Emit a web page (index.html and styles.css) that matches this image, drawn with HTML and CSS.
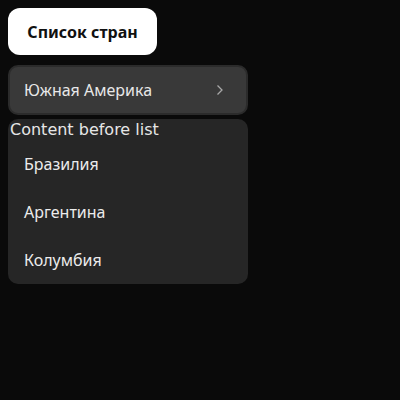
FILE: index.html
```html
<!DOCTYPE html>
<html lang="ru">
<head>
<meta charset="utf-8">
<link rel="stylesheet" href="styles.css">
</head>
<body>
<div class="page">
  <button class="title-btn">Список стран</button>
  <div class="group-row">
    <span class="group-label">Южная Америка</span>
    <svg class="chev" width="8" height="12" viewBox="0 0 8 12"><path d="M1.5 1.5 L6 6 L1.5 10.5" fill="none" stroke="#a8a8a8" stroke-width="1.3"/></svg>
  </div>
  <div class="list-card">
    <div class="before">Content before list</div>
    <div class="item">Бразилия</div>
    <div class="item">Аргентина</div>
    <div class="item">Колумбия</div>
  </div>
</div>
</body>
</html>
```
FILE: styles.css
```css
html, body { margin: 0; padding: 0; background: #0a0a0a; }
body { width: 400px; height: 400px; }
.page { padding: 8px; display: flex; flex-direction: column; align-items: flex-start; }
.title-btn {
  width: 149px; height: 47px;
  background: #ffffff; color: #111;
  border: none; border-radius: 12px;
  font-family: "Noto Sans", sans-serif; font-weight: 700; font-size: 16px;
  padding: 0;
}
.group-row {
  margin-top: 10px;
  box-sizing: border-box;
  width: 240px; height: 50px;
  background: #393939;
  border: 2px solid #2b2b2b;
  border-radius: 10px;
  display: flex; align-items: center; justify-content: space-between;
  padding: 0 22px 0 14px;
  font-family: "Noto Sans", sans-serif; font-size: 16px; color: #e8e8e8;
}
.list-card {
  margin-top: 4px;
  width: 240px;
  background: #262626;
  border-radius: 10px;
  display: flex; flex-direction: column;
}
.before {
  font-family: "DejaVu Sans", sans-serif; font-size: 16px; color: #e6e6e6;
  padding: 1px 0 0 2px; height: 20px; line-height: 19px;
}
.item {
  height: 48px; display: flex; align-items: center;
  padding-left: 16px;
  font-family: "Noto Sans", sans-serif; font-size: 16px; color: #ececec;
}
```
